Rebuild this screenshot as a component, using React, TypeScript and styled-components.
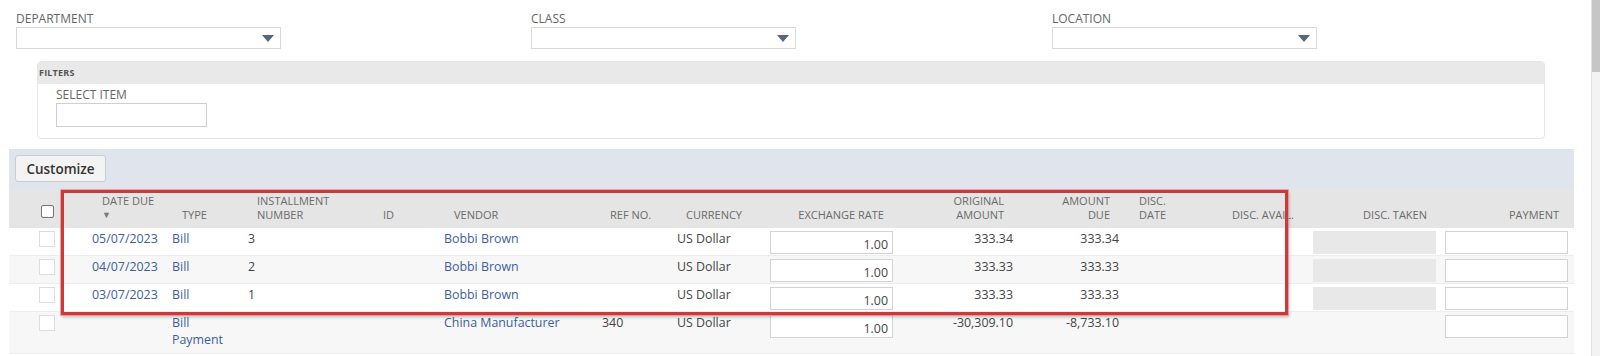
import React from "react";
import styled, { createGlobalStyle, css } from "styled-components";

const GlobalStyle = createGlobalStyle`
  html, body {
    margin: 0;
    padding: 0;
    background: #ffffff;
    overflow: hidden;
  }
  body {
    font-family: "Open Sans", "Liberation Sans", sans-serif;
    color: #444444;
  }
`;

const Page = styled.div`
  display: flex;
  width: 1600px;
  height: 356px;
  overflow: hidden;
`;

const Main = styled.div`
  flex: 1;
  min-width: 0;
`;

const ScrollTrack = styled.div`
  width: 8px;
  background: #f3f3f3;
  border-left: 1px solid #e2e2e2;
`;

const ScrollThumb = styled.div`
  height: 72px;
  background: #c6c6c6;
`;

const FieldRow = styled.div`
  display: grid;
  grid-template-columns: 515px 521px 265px;
  padding: 11px 0 0 16px;
`;

const Field = styled.div`
  display: flex;
  flex-direction: column;
`;

const FieldLabel = styled.label`
  font-size: 12px;
  line-height: 16px;
  color: #666666;
  text-transform: uppercase;
`;

const SelectBox = styled.div`
  width: 257px;
  height: 20px;
  border: 1px solid #d8d8d8;
  background: #ffffff;
  display: flex;
  align-items: center;
  justify-content: flex-end;
  padding-right: 6px;
`;

const FiltersBox = styled.div`
  margin: 12px 46px 0 37px;
  border: 1px solid #e6e6e6;
  border-radius: 4px;
  overflow: hidden;
`;

const FiltersHeader = styled.div`
  height: 21px;
  background: #e9e9e9;
  display: flex;
  align-items: center;
  padding: 0 0 1px 1px;
  font-size: 9px;
  font-weight: 700;
  color: #555555;
  letter-spacing: 0.2px;
`;

const FiltersBody = styled.div`
  padding: 3px 0 11px 18px;
  display: flex;
  flex-direction: column;
  align-items: flex-start;
`;

const TextInput = styled.div<{ $width: number }>`
  width: ${(p) => p.$width}px;
  height: 22px;
  border: 1px solid #cfcfcf;
  background: #ffffff;
`;

const Band = styled.div`
  margin: 10px 17px 0 9px;
  background: #e0e5ed;
  padding: 6px 6px 7px;
`;

const Button = styled.button`
  font-family: "Open Sans", "Liberation Sans", sans-serif;
  font-size: 13.5px;
  font-weight: 600;
  color: #333333;
  background: #f3f3f3;
  border: 1px solid #cccccc;
  border-radius: 3px;
  height: 27px;
  width: 91px;
  padding: 0;
  cursor: pointer;
`;

const TableWrap = styled.div`
  position: relative;
  margin: 0 17px 0 9px;
`;

const COLUMNS =
  "77px 80px 76px 128px 68px 158px 75px 93px 135px 121px 106px 74px 107px 135px 132px";

const HeaderRow = styled.div`
  display: grid;
  grid-template-columns: ${COLUMNS};
  height: 39px;
  background: #e5e5e5;
`;

const HeadCell = styled.div<{ $align: "left" | "right" | "center"; $pad: number }>`
  display: flex;
  flex-direction: column;
  justify-content: flex-end;
  align-items: ${(p) =>
    p.$align === "right" ? "flex-end" : p.$align === "center" ? "center" : "flex-start"};
  text-align: ${(p) => p.$align};
  padding: 0 ${(p) => (p.$align === "right" ? p.$pad : 0)}px 6px
    ${(p) => (p.$align === "left" ? p.$pad : 0)}px;
  font-size: 11px;
  line-height: 14px;
  color: #6a6a6a;
  text-transform: uppercase;
  white-space: pre-line;
`;

const SortArrow = styled.span`
  font-size: 9px;
  line-height: 14px;
  color: #7a7a7a;
`;

const BodyRow = styled.div<{ $alt: boolean }>`
  display: grid;
  grid-template-columns: ${COLUMNS};
  background: ${(p) => (p.$alt ? "#f7f7f7" : "#ffffff")};
  border-bottom: 1px solid #ededed;
  min-height: 27px;
`;

const Cell = styled.div<{ $align?: "left" | "right" | "center"; $pad?: number }>`
  font-size: 12.4px;
  line-height: 17px;
  padding-top: 2px;
  padding-bottom: 5px;
  text-align: ${(p) => p.$align ?? "left"};
  ${(p) =>
    p.$align === "right"
      ? css`
          padding-right: ${p.$pad ?? 7}px;
        `
      : css`
          padding-left: ${p.$pad ?? 6}px;
        `}
  ${(p) =>
    p.$align === "center" &&
    css`
      padding: 3px 0 0;
      display: flex;
      justify-content: center;
    `}
`;

const LinkText = styled.a`
  color: #3c5e9e;
  text-decoration: none;
`;

const HeadCheck = styled.span`
  width: 11px;
  height: 11px;
  border: 1px solid #767676;
  border-radius: 2px;
  background: #ffffff;
  margin-bottom: 4px;
`;

const RowCheck = styled.span`
  display: block;
  width: 14px;
  height: 14px;
  margin-right: 1px;
  border: 1px solid #dddddd;
  background: #ffffff;
`;

const InputCell = styled.div`
  padding-top: 3px;
`;

const NumBox = styled.div`
  margin: 0 6px;
  height: 23px;
  border: 1px solid #d3d3d3;
  background: #ffffff;
  box-sizing: border-box;
  font-size: 12.4px;
  line-height: 22px;
  padding: 2px 4px 0 0;
  text-align: right;
`;

const GreyBox = styled.div`
  margin: 0 6px;
  height: 23px;
  background: #e8e8e8;
`;

const PayBox = styled.div`
  margin: 0 6px 0 3px;
  height: 23px;
  border: 1px solid #d3d3d3;
  background: #ffffff;
  box-sizing: border-box;
`;

const Highlight = styled.div`
  position: absolute;
  left: 52px;
  top: 1px;
  width: 1227px;
  height: 125px;
  border: 3px solid #c93b3b;
  box-shadow: 0 0 0 1px rgba(236, 140, 140, 0.75), 1px 2px 3px rgba(0, 0, 0, 0.25);
  box-sizing: border-box;
  pointer-events: none;
`;

type Align = "left" | "right" | "center";

interface Column {
  label: string;
  align: Align;
  pad: number;
}

const headers: Column[] = [
  { label: "", align: "center", pad: 0 },
  { label: "Date Due", align: "left", pad: 16 },
  { label: "Type", align: "left", pad: 16 },
  { label: "Installment\nNumber", align: "left", pad: 15 },
  { label: "ID", align: "left", pad: 13 },
  { label: "Vendor", align: "left", pad: 16 },
  { label: "Ref No.", align: "left", pad: 14 },
  { label: "Currency", align: "left", pad: 15 },
  { label: "Exchange Rate", align: "right", pad: 15 },
  { label: "Original\nAmount", align: "right", pad: 16 },
  { label: "Amount\nDue", align: "right", pad: 16 },
  { label: "Disc.\nDate", align: "left", pad: 13 },
  { label: "Disc. Avail.", align: "right", pad: 13 },
  { label: "Disc. Taken", align: "right", pad: 15 },
  { label: "Payment", align: "right", pad: 15 },
];

interface Bill {
  date: string;
  type: string;
  installment: string;
  vendor: string;
  refNo: string;
  currency: string;
  rate: string;
  original: string;
  due: string;
  discount: boolean;
}

const bills: Bill[] = [
  {
    date: "05/07/2023",
    type: "Bill",
    installment: "3",
    vendor: "Bobbi Brown",
    refNo: "",
    currency: "US Dollar",
    rate: "1.00",
    original: "333.34",
    due: "333.34",
    discount: true,
  },
  {
    date: "04/07/2023",
    type: "Bill",
    installment: "2",
    vendor: "Bobbi Brown",
    refNo: "",
    currency: "US Dollar",
    rate: "1.00",
    original: "333.33",
    due: "333.33",
    discount: true,
  },
  {
    date: "03/07/2023",
    type: "Bill",
    installment: "1",
    vendor: "Bobbi Brown",
    refNo: "",
    currency: "US Dollar",
    rate: "1.00",
    original: "333.33",
    due: "333.33",
    discount: true,
  },
  {
    date: "",
    type: "Bill Payment",
    installment: "",
    vendor: "China Manufacturer",
    refNo: "340",
    currency: "US Dollar",
    rate: "1.00",
    original: "-30,309.10",
    due: "-8,733.10",
    discount: false,
  },
  {
    date: "",
    type: "",
    installment: "",
    vendor: "",
    refNo: "",
    currency: "",
    rate: "",
    original: "",
    due: "",
    discount: false,
  },
];

const Caret = () => (
  <svg width="12" height="7" viewBox="0 0 12 7">
    <polygon points="0,0 12,0 6,7" fill="#56667f" />
  </svg>
);

const SelectField = ({ label }: { label: string }) => (
  <Field>
    <FieldLabel>{label}</FieldLabel>
    <SelectBox>
      <Caret />
    </SelectBox>
  </Field>
);

const renderHeader = () => (
  <HeaderRow>
    {headers.map((col, i) => (
      <HeadCell key={i} $align={col.align} $pad={col.pad}>
        {i === 0 ? <HeadCheck /> : col.label}
        {i === 1 && <SortArrow>▼</SortArrow>}
      </HeadCell>
    ))}
  </HeaderRow>
);

const renderRows = () =>
  bills.map((bill, i) => (
    <BodyRow key={i} $alt={i % 2 === 1}>
      <Cell $align="center">
        <RowCheck />
      </Cell>
      <Cell>{bill.date && <LinkText>{bill.date}</LinkText>}</Cell>
      <Cell>{bill.type && <LinkText>{bill.type}</LinkText>}</Cell>
      <Cell>{bill.installment}</Cell>
      <Cell />
      <Cell>{bill.vendor && <LinkText>{bill.vendor}</LinkText>}</Cell>
      <Cell>{bill.refNo}</Cell>
      <Cell>{bill.currency}</Cell>
      <InputCell>
        <NumBox>{bill.rate}</NumBox>
      </InputCell>
      <Cell $align="right">{bill.original}</Cell>
      <Cell $align="right">{bill.due}</Cell>
      <Cell />
      <Cell />
      <InputCell>{bill.discount && <GreyBox />}</InputCell>
      <InputCell>
        <PayBox />
      </InputCell>
    </BodyRow>
  ));

export default function App() {
  return (
    <Page>
      <GlobalStyle />
      <Main>
        <FieldRow>
          <SelectField label="Department" />
          <SelectField label="Class" />
          <SelectField label="Location" />
        </FieldRow>
        <FiltersBox>
          <FiltersHeader>FILTERS</FiltersHeader>
          <FiltersBody>
            <FieldLabel>Select Item</FieldLabel>
            <TextInput $width={149} />
          </FiltersBody>
        </FiltersBox>
        <Band>
          <Button>Customize</Button>
        </Band>
        <TableWrap>
          {renderHeader()}
          {renderRows()}
          <Highlight />
        </TableWrap>
      </Main>
      <ScrollTrack>
        <ScrollThumb />
      </ScrollTrack>
    </Page>
  );
}
